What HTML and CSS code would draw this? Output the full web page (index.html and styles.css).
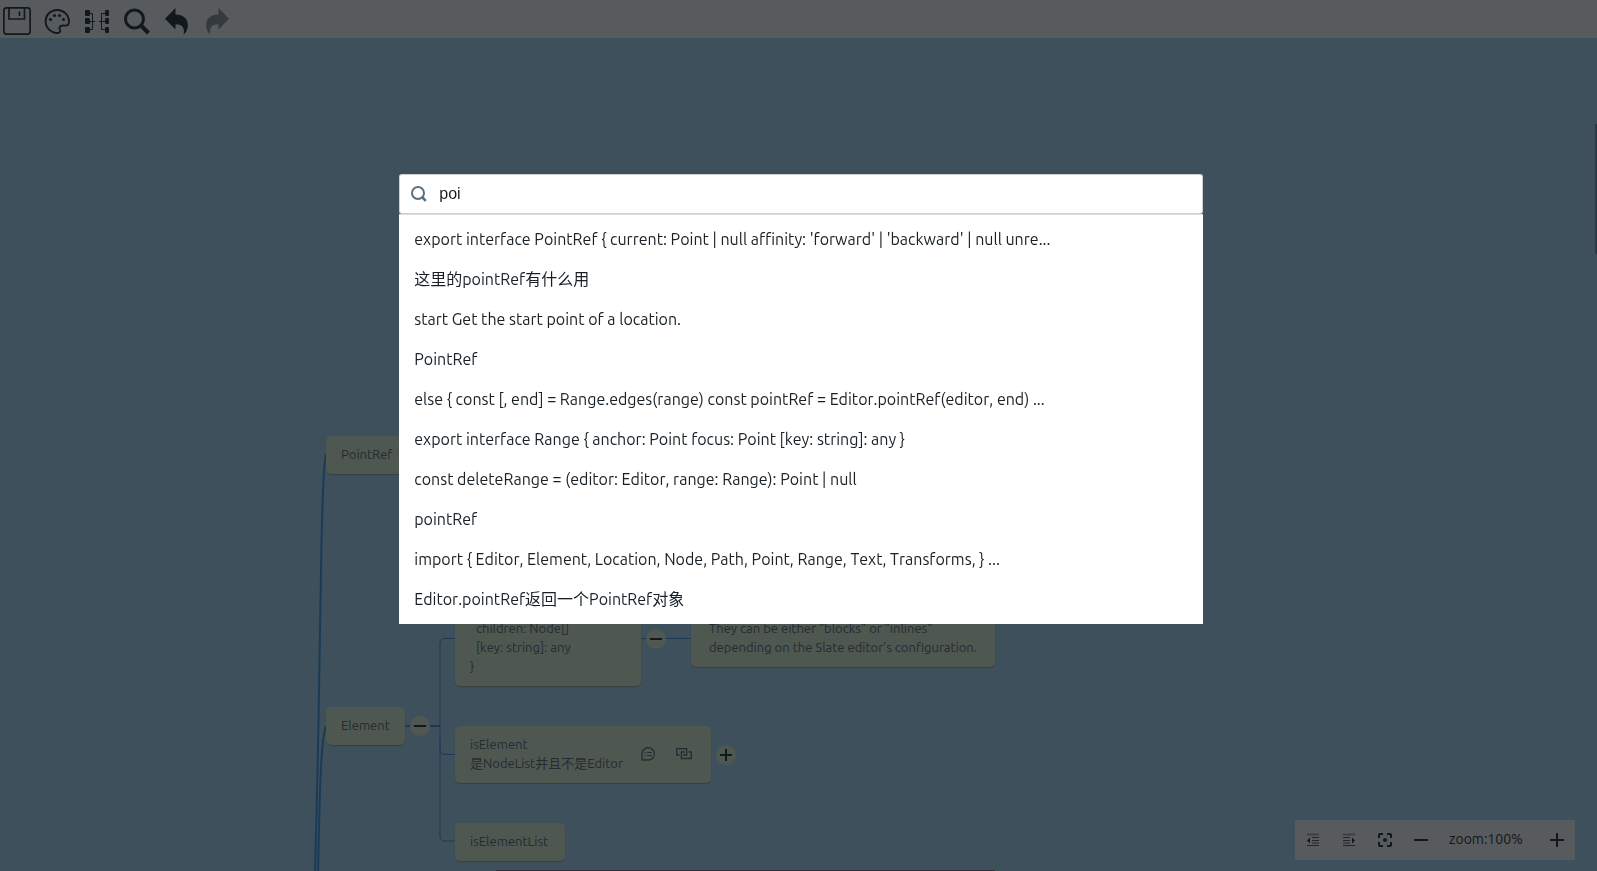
FILE: index.html
```html
<!DOCTYPE html>
<html lang="en">
<head>
<meta charset="utf-8">
<title>Mind map</title>
<link rel="stylesheet" href="styles.css">
</head>
<body>
<div class="app">
  <header class="toolbar">
    <button class="tool" aria-label="Save"><svg viewBox="0 0 28 28" fill="none" stroke="currentColor" stroke-width="1.700"><rect x=".9" y=".9" width="26.200" height="26.200" rx="2.500"/><path d="M6 1v11h15.500V1M16.500 4.500v4.500"/></svg></button>
    <button class="tool" aria-label="Theme"><svg viewBox="0 0 28 28"><path d="M14 3C7.500 3 2.600 8 2.600 14.300 2.600 20.800 8 26 14.500 26c2.500 0 3.200-1.500 2.300-3.200-.9-2.200.2-4.200 2.700-4.300l3 .1c2.600 0 3.600-1.900 3.500-4.300C25.800 7.800 20.500 3 14 3z" fill="none" stroke="currentColor" stroke-width="1.900"/><g fill="currentColor"><circle cx="7.500" cy="12.500" r="1.600"/><circle cx="11.500" cy="8.500" r="1.600"/><circle cx="16.500" cy="8.500" r="1.600"/><circle cx="20.500" cy="12.500" r="1.600"/></g></svg></button>
    <button class="tool" aria-label="Layout"><svg viewBox="0 0 28 28"><g fill="currentColor"><rect x="2" y="3" width="5" height="6" rx="1"/><rect x="2" y="11" width="5" height="6" rx="1"/><rect x="2" y="20" width="5" height="6" rx="1"/><rect x="22" y="3" width="4" height="6" rx="1"/><rect x="22" y="11" width="4" height="6" rx="1"/><rect x="22" y="20" width="4" height="6" rx="1"/></g><path d="M7 6.500h2.500v16H7M7 14.500h5M22 6.500h-3.500v16H22M22 14.500h-6" fill="none" stroke="currentColor"/></svg></button>
    <button class="tool" aria-label="Search"><svg viewBox="0 0 28 28" fill="none" stroke="currentColor"><circle cx="11.500" cy="12" r="9" stroke-width="3"/><path d="M18 18.500l7.500 7.500" stroke-width="4"/></svg></button>
    <button class="tool" aria-label="Undo"><svg viewBox="0 0 28 28" fill="currentColor"><path d="M12.500 1v6.500c8 .2 12.300 4 12.400 10.500 0 4-1.600 7.200-4.300 9.700 1.200-6.500-.8-10.500-8.100-10.500v5.300L2 11.800z"/></svg></button>
    <button class="tool" aria-label="Redo" disabled><svg viewBox="-1 0 28 28" fill="currentColor"><path d="M14.500 1v6.500C6.500 7.700 2.200 11.500 2.100 18c0 4 1.600 7.200 4.300 9.700-1.200-6.500.8-10.500 8.100-10.500v5.300L25 11.800z"/></svg></button>
  </header>

  <main class="canvas">
    <svg class="links" width="1000" height="833" fill="none">
      <g stroke-width="2">
        <path d="M326 416C320 440 321 640 315 833"/>
        <path d="M326 688C320 705 320 760 318 833"/>
        <path d="M405 688h35"/>
      </g>
      <path d="M455 600.500h-10q-5 0-5 5v106q0 5 5 5h10M440 700v98q0 5 5 5h10M641 600.500h50"/>
    </svg>
    <div class="node node-pointref">PointRef</div>
    <div class="node node-element">Element</div>
    <div class="node node-interface">  children: Node[]
  [key: string]: any
}</div>
    <div class="node node-note">They can be either "blocks" or "inlines"
depending on the Slate editor's configuration.</div>
    <div class="node node-iselement">
      <span>isElement
是NodeList并且不是Editor</span>
      <svg width="24" height="16" viewBox="0 0 16 16" fill="none" stroke="currentColor"><path d="M2 14V7.800A6.200 6.200 0 1 1 8.200 14z" stroke-width="1.300"/><path d="M4.500 6.500h1M7 6.500h5M4.500 9.500h1M7 9.500h5"/></svg>
      <svg width="24" height="16" viewBox="0 0 18 16" fill="none" stroke="currentColor" stroke-width="1.300"><path d="M4.500 9H1.700V2.700h10V9H8M13.500 6h2.800v6.500h-10V6h3.500"/></svg>
    </div>
    <div class="node node-list">isElementList</div>
    <button class="toggle toggle-element" aria-label="Collapse Element"><svg width="20" height="20"><path d="M4 10h12"/></svg></button>
    <button class="toggle toggle-interface" aria-label="Collapse interface"><svg width="20" height="20"><path d="M4 10h12"/></svg></button>
    <button class="toggle toggle-iselement" aria-label="Expand isElement"><svg width="20" height="20"><path d="M4 10h12M10 4v12"/></svg></button>
    <i class="thumb-y"></i>
    <i class="thumb-x"></i>
  </main>

  <div class="zoombar">
    <button aria-label="Collapse all"><svg width="14" height="14" fill="none" stroke="currentColor"><path d="M1 1.500h12" stroke-width="2" opacity=".4"/><path d="M6 4.500h7M6 7.500h7M6 10h7M1 12.500h12" opacity=".8"/><path d="M4 4.500L1 7.500l3 3z" fill="currentColor" stroke="none"/></svg></button>
    <button aria-label="Expand all"><svg width="14" height="14" fill="none" stroke="currentColor"><path d="M1 1.500h12" stroke-width="2" opacity=".4"/><path d="M1 4.500h7M1 7.500h7M1 10h7M1 12.500h12" opacity=".8"/><path d="M10 4.500l3 3-3 3z" fill="currentColor" stroke="none"/></svg></button>
    <button aria-label="Fit to screen"><svg width="14" height="14" fill="none" stroke="currentColor" stroke-width="2"><path d="M1 5V2q0-1 1-1h3M9 1h3q1 0 1 1v3M13 9v3q0 1-1 1H9M5 13H2q-1 0-1-1V9"/><circle cx="7" cy="7" r="2" fill="currentColor" stroke="none"/></svg></button>
    <button aria-label="Zoom out"><svg width="14" height="14" stroke="currentColor" stroke-width="2"><path d="M0 7h14"/></svg></button>
    <span class="zoomlevel">zoom:100%</span>
    <button aria-label="Zoom in"><svg width="14" height="14" stroke="currentColor" stroke-width="2"><path d="M0 7h14M7 0v14"/></svg></button>
  </div>
</div>

<div class="backdrop">
  <section class="omnibar">
    <label class="field">
      <svg width="16" height="16" viewBox="0 0 16 16" fill="none" stroke="currentColor"><circle cx="7" cy="7" r="6" stroke-width="2"/><path d="M11.500 11.500l3.300 3.300" stroke-width="2.600"/></svg>
      <input type="text" value="poi" aria-label="Search">
    </label>
    <ul class="results">
      <li>export interface PointRef { current: Point | null affinity: 'forward' | 'backward' | null unre...</li>
      <li>这里的pointRef有什么用</li>
      <li>start Get the start point of a location.</li>
      <li>PointRef</li>
      <li>else { const [, end] = Range.edges(range) const pointRef = Editor.pointRef(editor, end) ...</li>
      <li>export interface Range { anchor: Point focus: Point [key: string]: any }</li>
      <li>const deleteRange = (editor: Editor, range: Range): Point | null</li>
      <li>pointRef</li>
      <li>import { Editor, Element, Location, Node, Path, Point, Range, Text, Transforms, } ...</li>
      <li>Editor.pointRef返回一个PointRef对象</li>
    </ul>
  </section>
</div>
</body>
</html>
```
FILE: styles.css
```css
* { box-sizing: border-box; }

body {
  margin: 0;
  font-family: Ubuntu, "Noto Sans", "Noto Sans CJK SC", sans-serif;
  font-kerning: none;
  color: #182026;
}

button {
  display: grid;
  place-items: center;
  padding: 0;
  border: 0;
  background: none;
  color: inherit;
}

.app {
  position: relative;
  display: flex;
  flex-direction: column;
  height: 100vh;
  overflow: hidden;
}

.toolbar {
  display: flex;
  gap: 12px;
  height: 38px;
  padding: 4px 3px 0;
  background: #fff;
}
.tool { width: 28px; height: 34px; }
.tool svg { width: 28px; height: 28px; }
.tool:disabled { opacity: .5; }

.canvas {
  position: relative;
  flex: 1;
  background: #a9dbf4;
}
.links { position: absolute; left: 0; top: 0; stroke: #3492e8; }

.node {
  position: absolute;
  padding: 9px 15px 10px;
  border-radius: 5px;
  background: #e3f2d2;
  box-shadow: 0 1px 1px #a09c98;
  color: #55626a;
  font-size: 13px;
  line-height: 19px;
  white-space: pre;
}
.node-pointref { left: 326px; top: 398px; }
.node-element { left: 326px; top: 669px; width: 79px; }
.node-interface { left: 455px; top: 572px; width: 186px; }
.node-note { left: 691px; top: 572px; width: 304px; padding: 9px 18px 10px; }
.node-iselement { left: 455px; top: 688px; width: 256px; display: flex; align-items: center; gap: 12px; }
.node-iselement span { flex: 1; }
.node-list { left: 455px; top: 785px; width: 110px; }

.toggle {
  position: absolute;
  width: 20px;
  height: 20px;
  border-radius: 50%;
  background: #e3f2d2;
}
.toggle svg { stroke: #182026; stroke-width: 2; }
.toggle-element { left: 410px; top: 678px; }
.toggle-interface { left: 646px; top: 591px; }
.toggle-iselement { left: 716px; top: 707px; }

.thumb-y { position: absolute; right: 0; top: 86px; width: 2px; height: 130px; background: #7090a8; }
.thumb-x { position: absolute; left: 496px; bottom: 0; width: 499px; height: 1px; background: #706c70; }

.zoombar {
  position: absolute;
  right: 22px;
  bottom: 11px;
  display: grid;
  grid-template-columns: repeat(4, 36px) 100px 36px;
  height: 40px;
  border-radius: 2px;
  background: #fff;
  align-items: center;
}
.zoomlevel { padding: 0 0 2px 10px; font-size: 14px; }

.backdrop {
  position: fixed;
  inset: 0;
  background: rgba(16, 22, 26, .7);
}
.omnibar {
  width: calc(50% + 5px);
  margin: 20vh 0 0 25%;
}
.field {
  display: flex;
  align-items: center;
  gap: 12px;
  height: 40px;
  padding: 0 12px;
  border-radius: 3px;
  background: #fff;
  box-shadow: inset 0 0 0 1px rgba(16, 22, 26, .2);
  color: #5c7080;
}
.field input {
  flex: 1;
  border: 0;
  outline: 0;
  padding: 0;
  background: none;
  color: #182026;
  font: 16px "Liberation Sans", Arial, sans-serif;
}
.results {
  margin: 0;
  padding: 4px 0 5px;
  border-top: 1px solid #dadcdd;
  background: #fff;
  list-style: none;
}
.results li {
  padding: 0 15px;
  font-size: 16px;
  line-height: 40px;
  white-space: nowrap;
  overflow: hidden;
  text-overflow: ellipsis;
}
```
